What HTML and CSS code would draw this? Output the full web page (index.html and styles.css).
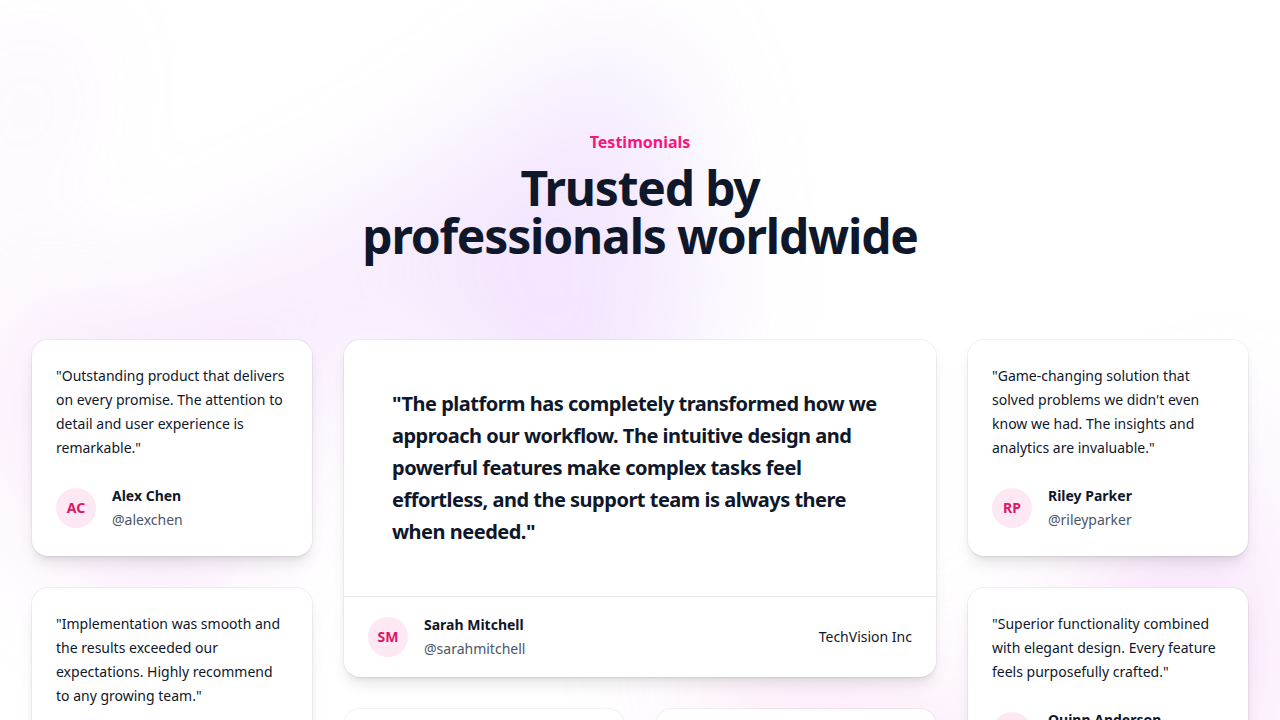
FILE: index.html
```html
<!DOCTYPE html>
<html lang="en">
<head>
    <meta charset="UTF-8">
    <meta name="viewport" content="width=device-width, initial-scale=1.0">
    <title>Testimonials</title>
    <link rel="stylesheet" href="styles.css">
</head>
<body>
    <section class="testimonials">
        <div class="glow glow-middle" aria-hidden="true">
            <div class="glow-shape"></div>
        </div>
        <div class="glow glow-top" aria-hidden="true">
            <div class="glow-shape"></div>
        </div>

        <div class="container">
            <header class="section-header">
                <p class="eyebrow">Testimonials</p>
                <h1>Trusted by professionals worldwide</h1>
            </header>

            <div class="grid">
                <div class="column side">
                    <figure class="card">
                        <blockquote>"Outstanding product that delivers on every promise. The attention to detail and user experience is remarkable."</blockquote>
                        <figcaption>
                            <span class="avatar">AC</span>
                            <div>
                                <div class="name">Alex Chen</div>
                                <div class="handle">@alexchen</div>
                            </div>
                        </figcaption>
                    </figure>
                    <figure class="card">
                        <blockquote>"Implementation was smooth and the results exceeded our expectations. Highly recommend to any growing team."</blockquote>
                    </figure>
                </div>

                <div class="center">
                    <figure class="card featured">
                        <blockquote>"The platform has completely transformed how we approach our workflow. The intuitive design and powerful features make complex tasks feel effortless, and the support team is always there when needed."</blockquote>
                        <figcaption>
                            <span class="avatar">SM</span>
                            <div>
                                <div class="name">Sarah Mitchell</div>
                                <div class="handle">@sarahmitchell</div>
                            </div>
                            <div class="company">TechVision Inc</div>
                        </figcaption>
                    </figure>
                    <figure class="card"></figure>
                    <figure class="card"></figure>
                </div>

                <div class="column side">
                    <figure class="card">
                        <blockquote>"Game-changing solution that solved problems we didn't even know we had. The insights and analytics are invaluable."</blockquote>
                        <figcaption>
                            <span class="avatar">RP</span>
                            <div>
                                <div class="name">Riley Parker</div>
                                <div class="handle">@rileyparker</div>
                            </div>
                        </figcaption>
                    </figure>
                    <figure class="card">
                        <blockquote>"Superior functionality combined with elegant design. Every feature feels purposefully crafted."</blockquote>
                        <figcaption>
                            <span class="avatar">QA</span>
                            <div>
                                <div class="name">Quinn Anderson</div>
                                <div class="handle">@quinnanderson</div>
                            </div>
                        </figcaption>
                    </figure>
                </div>
            </div>
        </div>
    </section>
</body>
</html>
```
FILE: styles.css
```css
* {
    box-sizing: border-box;
}
body {
    margin: 0;
    font-family: "Noto Sans", sans-serif;
    color: #0f172a;
    background-color: #fff;
}
h1, p, figure, blockquote {
    margin: 0;
}
.testimonials {
    position: relative;
    isolation: isolate;
    padding: 128px 0;
}

/* blurred background shapes */
.glow {
    position: absolute;
    left: 0;
    right: 0;
    z-index: -1;
    overflow: hidden;
    filter: blur(64px);
}
.glow-middle {
    top: 50%;
    transform: translateY(-50%);
    opacity: 0.3;
}
.glow-top {
    top: 0;
    display: flex;
    justify-content: flex-end;
    padding-top: 160px;
    opacity: 0.25;
}
.glow-shape {
    flex: none;
    width: 1313px;
    aspect-ratio: 1313 / 771;
    background: linear-gradient(to top right, #ffaae6, #c69aff);
    clip-path: polygon(74.1% 44.1%, 100% 61.6%, 97.5% 26.9%, 85.5% 0.1%, 80.7% 2%, 72.5% 32.5%, 60.2% 62.4%, 52.4% 68.1%, 47.5% 58.3%, 45.2% 34.5%, 27.5% 76.7%, 0.1% 64.9%, 17.9% 100%, 27.6% 76.8%, 76.1% 97.7%, 74.1% 44.1%);
}
.glow-middle .glow-shape {
    margin-left: max(50%, 608px);
}
.glow-top .glow-shape {
    margin-right: calc(50% - 192px);
    transform: rotate(30deg);
    transform-origin: top right;
}

.container {
    max-width: 1280px;
    margin: 0 auto;
    padding: 0 32px;
}
.section-header {
    max-width: 672px;
    margin: 0 auto;
    text-align: center;
}
.eyebrow {
    font-size: 16px;
    line-height: 28px;
    font-weight: 700;
    color: #f6177b;
}
h1 {
    margin-top: 8px;
    font-size: 48px;
    line-height: 48px;
    font-weight: 700;
    letter-spacing: -0.025em;
    text-wrap: balance;
}

.grid {
    display: grid;
    grid-template-columns: repeat(4, minmax(0, 1fr));
    gap: 32px;
    margin-top: 80px;
    font-size: 14px;
    line-height: 24px;
}
.column {
    display: flex;
    flex-direction: column;
    gap: 32px;
}
.center {
    grid-column: span 2;
    display: grid;
    grid-template-columns: repeat(2, minmax(0, 1fr));
    grid-template-rows: auto 1fr;
    gap: 32px;
}
.card {
    min-height: 192px;
    padding: 24px;
    border-radius: 16px;
    background-color: #fff;
    box-shadow: 0 0 0 1px rgba(15, 23, 42, 0.05), 0 10px 15px -3px rgba(0, 0, 0, 0.1), 0 4px 6px -4px rgba(0, 0, 0, 0.1);
}
.side .card:last-child {
    flex-grow: 1;
}
figcaption {
    display: flex;
    align-items: center;
    gap: 16px;
    margin-top: 24px;
}
.avatar {
    display: flex;
    align-items: center;
    justify-content: center;
    width: 40px;
    height: 40px;
    border-radius: 50%;
    background-color: #fee8f4;
    color: #db1766;
    font-weight: 700;
}
.name {
    font-weight: 700;
}
.handle {
    color: #4a5568;
}
.featured {
    grid-column: span 2;
    padding: 0;
}
.featured blockquote {
    padding: 48px;
    font-size: 20px;
    line-height: 32px;
    font-weight: 700;
    letter-spacing: -0.025em;
}
.featured figcaption {
    margin: 0;
    padding: 16px 24px;
    border-top: 1px solid #e5e7eb;
}
.company {
    margin-left: auto;
}

@media (max-width: 1000px) {
    .grid {
        grid-template-columns: 1fr;
    }
    .center {
        grid-column: auto;
    }
}
```
